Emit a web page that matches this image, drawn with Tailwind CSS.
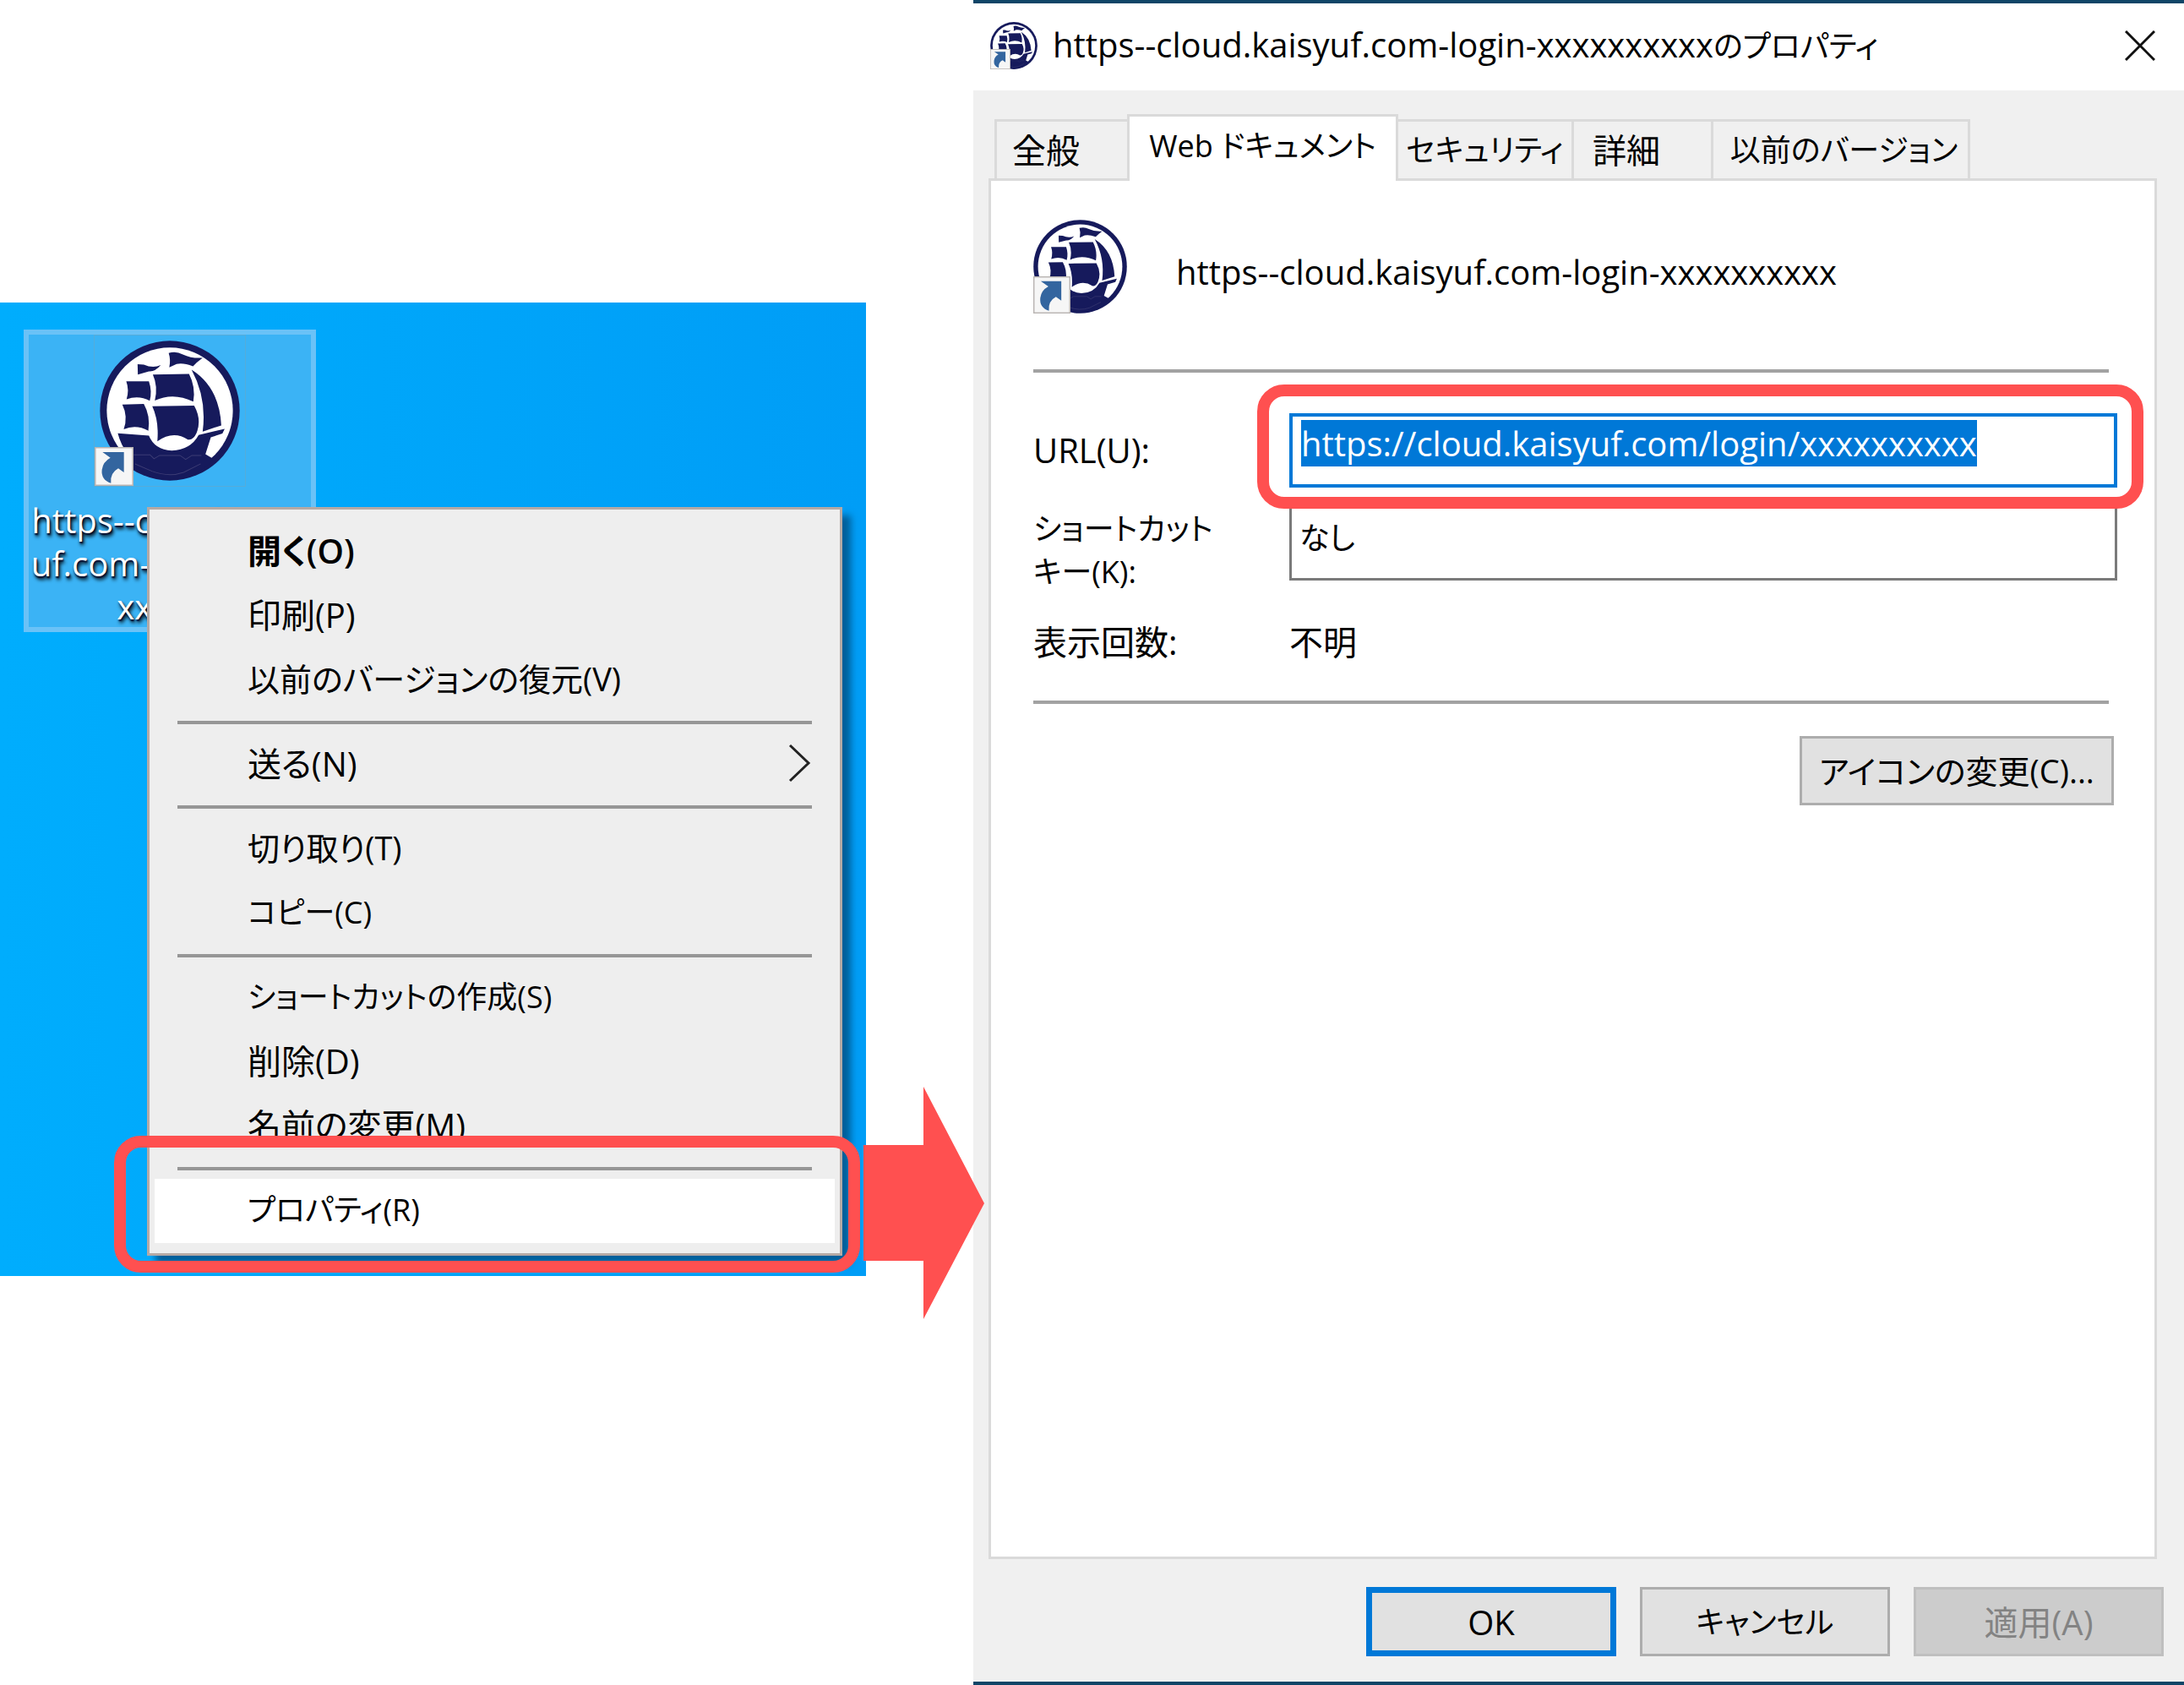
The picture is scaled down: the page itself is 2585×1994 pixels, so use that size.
<!DOCTYPE html>
<html lang="ja">
<head>
<meta charset="utf-8">
<title>ショートカットのプロパティ</title>
<script src="https://cdn.jsdelivr.net/npm/@tailwindcss/browser@4"></script>
</head>
<body class="bg-white text-black text-[40px] leading-[51px] font-['Open_Sans','Noto_Sans_CJK_JP',sans-serif] [font-feature-settings:'palt']">

<svg class="hidden" aria-hidden="true">
  <symbol id="ship" viewBox="350 188 496 496">
    <circle cx="598" cy="436" r="247" fill="#161a5c"/>
    <circle cx="598" cy="436" r="223" fill="#fff"/>
    <g fill="#161a5c">
      <path d="M594 232q26-8 50 5 32 15 70 12-22 16-34 30-36-14-58-8l-26 12q6-26-2-51z"/>
      <path d="M484 272l22 1q32 14 60 2-20 24-42 22l-39 11z"/>
      <path d="M444 332h80q12 35 3 69-40-21-82-5 10-34-1-64z"/>
      <path d="M538 308l128-2q24 46 15 98-70-34-136-4 12-50-7-92z"/>
      <path d="M430 414l76-2q24 42 16 95-44-24-87-5 16-46-5-88z"/>
      <path d="M536 420l148-2q28 50 8 98-12 26-30 22-52-34-108 6 6-72-18-124z"/>
      <path d="M675 291q98 62 105 197l-66 22q16-116-39-219z"/>
      <path d="M414 516l110 8q20 50 81 53 66-2 95-55l92-22-8 17-41 13-19 60 28 16q-60 74-154 74-110-4-148-90-26-34-36-74z"/>
    </g>
    <path d="M470 592h58l14 14 20-12h72l20 14 22-14h34M475 624l60 26q60 22 112 4l60-30" fill="none" stroke="#3c3c74" stroke-width="3"/>
  </symbol>
  <symbol id="link-badge" viewBox="332 572 138 138">
    <rect x="334" y="574" width="134" height="134" fill="#f6f6f6" stroke="#b9b4b2" stroke-width="5"/>
    <path d="M360 590h76v72l-20-14q-30 16-26 52-36-12-32-48 4-28 30-42z" fill="#33659f"/>
  </symbol>
</svg>

<div class="grid min-h-screen grid-cols-[1025fr_127fr_1433fr]">

  <!-- Desktop with the shortcut's context menu -->
  <section class="relative mt-[358px] h-[1152px] bg-linear-to-r from-[#00adfd] to-[#009df6]">
    <div class="relative ml-7 mt-8 inline-flex h-[358px] w-[346px] flex-col items-center border-6 border-[#6ac2f7] bg-[#3bb3f5]">
      <div class="relative size-[180px] shrink-0 border border-[#55acd9] p-[6px]">
        <svg class="size-[166px]"><use href="#ship"/></svg>
        <svg class="absolute bottom-0 left-0 size-[46px]"><use href="#link-badge"/></svg>
      </div>
      <p class="mt-[14px] whitespace-nowrap text-center text-white [text-shadow:2px_4px_4px_#000,1px_2px_2px_#003]">https--cloud.kaisy<br>uf.com-login-xxxx<br>xxxxxx</p>
    </div>

    <nav class="absolute left-[174px] right-7 top-[242px] border-3 border-[#b5a9a5] bg-[#eeeeee] px-[6px] py-3 shadow-[10px_10px_8px_#005f9a]">
      <button class="block h-[76px] w-full pb-1 pl-[110px] text-left font-semibold">開く(O)</button>
      <button class="block h-[76px] w-full pb-1 pl-[110px] text-left">印刷(P)</button>
      <button class="block h-[76px] w-full pb-1 pl-[110px] text-left text-[38px]">以前のバージョンの復元(V)</button>
      <hr class="mx-[27px] my-[10px] border-t-4 border-[#969696]">
      <button class="flex h-[76px] w-full items-center justify-between pb-1 pl-[110px] pr-7">送る(N)
        <svg class="h-[46px] w-7" viewBox="0 0 28 46" fill="none" stroke="#222" stroke-width="3"><path d="M3 2l22 21L3 44"/></svg>
      </button>
      <hr class="mx-[27px] my-[10px] border-t-4 border-[#969696]">
      <button class="block h-[76px] w-full pb-1 pl-[110px] text-left text-[38px]">切り取り(T)</button>
      <button class="block h-[76px] w-full pb-1 pl-[110px] text-left text-[36px]">コピー(C)</button>
      <hr class="mx-[27px] my-[10px] border-t-4 border-[#969696]">
      <button class="block h-[76px] w-full pb-1 pl-[110px] text-left text-[36px]">ショートカットの作成(S)</button>
      <button class="block h-[76px] w-full pb-1 pl-[110px] text-left">削除(D)</button>
      <button class="block h-[76px] w-full pb-1 pl-[110px] text-left">名前の変更(M)</button>
      <hr class="mx-[27px] my-[10px] border-t-4 border-[#969696]">
      <button class="block h-[76px] w-full bg-white pb-1 pl-[110px] text-left text-[36px]">プロパティ(R)</button>
    </nav>

    <div class="pointer-events-none absolute bottom-1 left-[135px] right-[7px] h-[162px] rounded-[32px] border-14 border-[#ff5050]"></div>
  </section>

  <!-- Arrow from the menu to the dialog -->
  <div class="relative z-10 mt-[1286px] h-[275px]">
    <svg class="absolute -left-[3px] top-0 h-[275px] w-[143px]" viewBox="0 0 143 275"><path d="M0 69h71V0l72 138-72 137v-69H0z" fill="#ff5050"/></svg>
  </div>

  <!-- Properties dialog -->
  <main class="flex flex-col border-y-4 border-[#0f4567] bg-[#f0f0f0]">
    <header class="flex h-[103px] items-center bg-white pb-1 pl-5 pr-[34px]">
      <div class="relative size-14">
        <svg class="size-14"><use href="#ship"/></svg>
        <svg class="absolute bottom-0 left-0 size-6"><use href="#link-badge"/></svg>
      </div>
      <h1 class="ml-[18px]">https--cloud.kaisyuf.com-login-xxxxxxxxxx<span class="text-[36px]">のプロパティ</span></h1>
      <button class="ml-auto" aria-label="閉じる">
        <svg class="size-9" viewBox="0 0 36 36" stroke="#111" stroke-width="3"><path d="M1 1l34 34M35 1L1 35"/></svg>
      </button>
    </header>

    <div class="ml-[25px] mt-7 flex items-end whitespace-nowrap">
      <button class="h-[70px] w-[160px] border-3 border-b-0 border-[#dadada] pl-[18px] text-left">全般</button>
      <button class="relative z-10 -mx-[3px] -mb-[3px] h-[79px] w-[321px] border-3 border-b-0 border-[#dadada] bg-white pb-2 text-[36px]">Web ドキュメント</button>
      <button class="h-[70px] w-[211px] border-3 border-b-0 border-[#dadada] text-[36px]">セキュリティ</button>
      <button class="h-[70px] w-[165px] border-r-3 border-t-3 border-[#dadada] pl-[22px] text-left">詳細</button>
      <button class="h-[70px] w-[304px] border-r-3 border-t-3 border-[#dadada] pl-2 text-[36px]">以前のバージョン</button>
    </div>

    <div class="ml-[18px] mr-8 grow border-3 border-[#dadada] bg-white pl-[50px]">
      <div class="mt-[46px] flex items-center">
        <div class="relative size-[111px]">
          <svg class="size-[111px]"><use href="#ship"/></svg>
          <svg class="absolute bottom-0 left-0 size-11"><use href="#link-badge"/></svg>
        </div>
        <p class="ml-[58px] pt-3">https--cloud.kaisyuf.com-login-xxxxxxxxxx</p>
      </div>
      <hr class="mr-[54px] mt-[66px] border-t-4 border-[#a2a2a2]">

      <div class="mr-11 mt-12 grid grid-cols-[303px_1fr]">
        <label for="url" class="pt-[18px]">URL(U):</label>
        <div class="relative">
          <input id="url" type="text" value="https://cloud.kaisyuf.com/login/xxxxxxxxxx" class="block h-[88px] w-full border-4 border-[#0078d7] bg-white pb-[23px] pl-[10px] pt-[6px] outline-none selection:bg-[#0078d7] selection:text-white">
          <div class="pointer-events-none absolute -bottom-[25px] -left-[38px] -right-[31px] -top-[34px] rounded-[32px] border-14 border-[#ff5050]"></div>
        </div>
        <label for="hotkey" class="mt-[23px] text-[36px]">ショートカット<br>キー(K):</label>
        <input id="hotkey" type="text" value="なし" class="mt-[22px] h-[88px] w-full border-3 border-[#7a7a7a] bg-white pb-6 pl-[9px] pt-[7px] text-[36px] outline-none">
        <p class="mt-8">表示回数:</p>
        <p class="mt-8">不明</p>
      </div>
      <hr class="mr-[54px] mt-11 border-t-4 border-[#a2a2a2]">
      <div class="mr-12 mt-[38px] flex justify-end">
        <button class="h-[82px] w-[372px] border-3 border-[#adadad] bg-[#e1e1e1] text-[38px]">アイコンの変更(C)...</button>
      </div>
    </div>

    <footer class="mb-[30px] mr-6 mt-[33px] flex justify-end gap-7">
      <button class="h-[82px] w-[296px] border-7 border-[#0078d7] bg-[#e1e1e1]">OK</button>
      <button class="h-[82px] w-[296px] border-3 border-[#adadad] bg-[#e1e1e1] text-[36px]">キャンセル</button>
      <button disabled class="h-[82px] w-[296px] border-3 border-[#bfbfbf] bg-[#cccccc] text-[#838383]">適用(A)</button>
    </footer>
  </main>
</div>

<script>
  const url = document.getElementById('url');
  url.focus();
  url.select();
</script>
</body>
</html>
